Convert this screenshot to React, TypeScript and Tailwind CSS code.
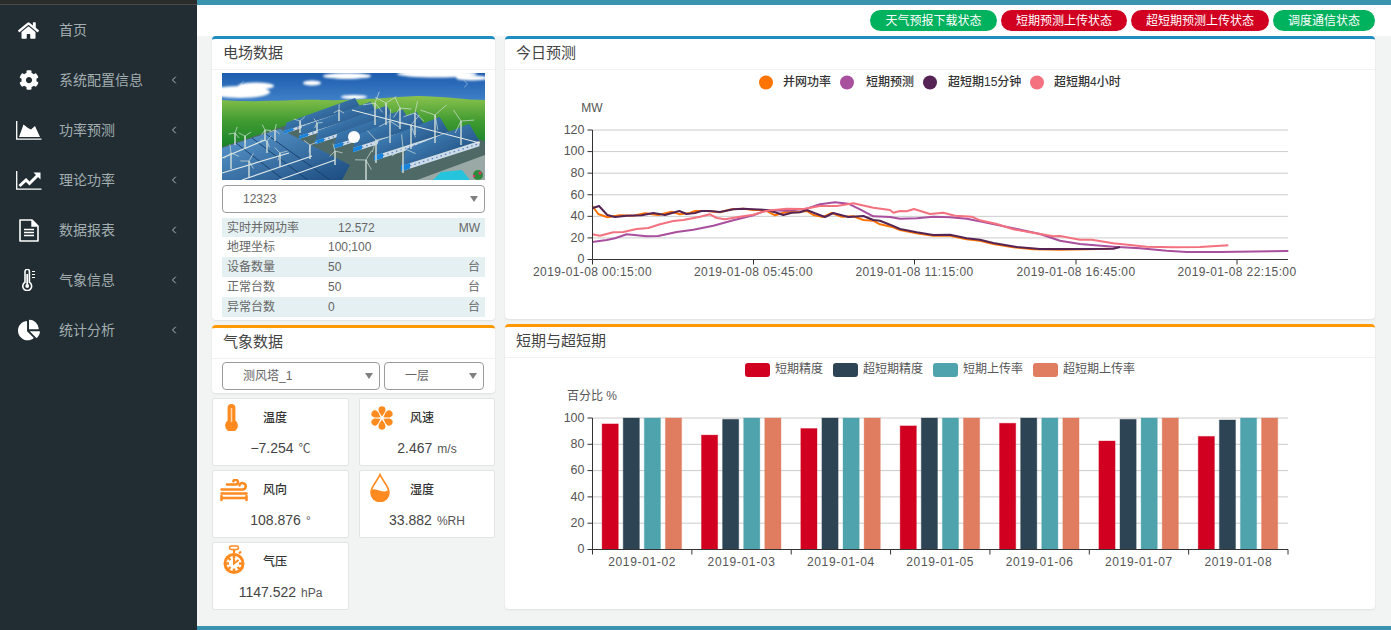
import type { ReactNode } from 'react';
import { ChevronLeft, ChevronRight } from 'lucide-react';
import { FaChartPie, FaCog, FaHome } from 'react-icons/fa';

const ORANGE = '#ff8a1f';

function SideArea() {
  return (
    <svg width="26" height="19" viewBox="0 0 26 19" fill="white">
      <path d="M.7 0v18.2H25.5" fill="none" stroke="white" strokeWidth="1.3" />
      <path d="M3 16L7.5 3.5L12 7L15 8.5L19 5L24 16z" />
    </svg>
  );
}

function SideLine() {
  return (
    <svg width="26" height="19" viewBox="0 0 26 19">
      <path d="M.7 0v18.2H25.5" fill="none" stroke="white" strokeWidth="1.3" />
      <path d="M3.5 15L10 9L13.5 12.5L22 4" fill="none" stroke="white" strokeWidth="3" />
      <path d="M17.5 1.5H24.5V8.5z" fill="white" />
    </svg>
  );
}

function SideFile() {
  return (
    <svg width="20" height="23" viewBox="0 0 20 23" fill="none" stroke="white">
      <path d="M1 1h12l6 6v15H1z" strokeWidth="1.6" strokeLinejoin="round" />
      <path d="M13 1v6h6" fill="white" strokeWidth="1.4" />
      <path d="M5 10.5h10M5 13.5h10M5 16.5h10" strokeWidth="1.5" />
    </svg>
  );
}

function SideThermometer() {
  return (
    <svg width="14" height="22" viewBox="0 0 14 22" fill="none" stroke="white" strokeWidth="1.6">
      <path d="M3 2.5a2.2 2.2 0 0 1 4.4 0v10.8a4.4 4.4 0 1 1-4.4 0z" />
      <circle cx="5.2" cy="17" r="1.9" fill="white" stroke="none" />
      <path d="M5.2 5v11" strokeWidth="1.8" />
      <path d="M10 2.5h3M10 5.5h3M10 8.5h3" strokeWidth="1.2" />
    </svg>
  );
}

const menu: { label: string; icon: ReactNode; arrow: boolean }[] = [
  { label: '首页', icon: <FaHome size={21} color="white" />, arrow: false },
  { label: '系统配置信息', icon: <FaCog size={20} color="white" />, arrow: true },
  { label: '功率预测', icon: <SideArea />, arrow: true },
  { label: '理论功率', icon: <SideLine />, arrow: true },
  { label: '数据报表', icon: <SideFile />, arrow: true },
  { label: '气象信息', icon: <SideThermometer />, arrow: true },
  { label: '统计分析', icon: <FaChartPie size={22} color="white" />, arrow: true },
];

function Sidebar() {
  return (
    <aside className="w-[197px] shrink-0 bg-[#212d33] flex flex-col">
      <div className="h-[5px] bg-[#2a2b2b] border-b border-[#474b4c]" />
      {menu.map((item) => (
        <div key={item.label} className="h-[50px] flex items-center pl-[15px] pr-[17px]">
          <div className="w-[27px] flex justify-center">{item.icon}</div>
          <span className="ml-[17px] flex-1 text-[14px] text-[#a3adb0]">{item.label}</span>
          {item.arrow && <ChevronLeft size={12} strokeWidth={2} className="text-[#b4bcbe]" />}
        </div>
      ))}
    </aside>
  );
}

function Card({ title, accent, className, children }: { title: string; accent: string; className: string; children: ReactNode }) {
  return (
    <section className={`bg-white rounded-[4px] border-t-[3px] shadow-[0_1px_2px_rgba(0,0,0,0.08)] flex flex-col ${accent} ${className}`}>
      <div className="h-[31px] shrink-0 border-b border-[#f0f1f1] pl-[11px] pb-[2px] flex items-center text-[15px] text-[#444]">
        {title}
      </div>
      {children}
    </section>
  );
}

function Select({ value, className }: { value: string; className: string }) {
  return (
    <div className={`h-[28px] border border-[#9c9c9c] rounded-[4px] pl-5 pr-[6px] flex items-center justify-between text-[12px] text-[#666] ${className}`}>
      <span>{value}</span>
      <span className="w-0 h-0 border-x-[4px] border-x-transparent border-t-[6px] border-t-[#808080]" />
    </div>
  );
}

function turbine(x: number, y: number, h: number, key: string, a: number) {
  const r = h * 0.55;
  const blades = [a, a + 120, a + 240].map((deg) => {
    const t = (deg * Math.PI) / 180;
    return `M${x} ${y - h}L${(x + r * Math.sin(t)).toFixed(1)} ${(y - h - r * Math.cos(t)).toFixed(1)}`;
  });
  return (
    <g key={key} stroke="#d3dfda" fill="none">
      <path d={`M${x} ${y}V${y - h}`} strokeWidth="1.4" />
      <path d={blades.join('')} strokeWidth="0.7" />
    </g>
  );
}

// row of the solar field: left end on the picture's diagonal, right end on the fence
function solarRow(sx: number, sy: number, gap: number, key: string) {
  const ex = (sy + 0.32 * sx + 6) / 0.607;
  const ey = sy - 0.32 * (ex - sx);
  const wall = gap * 0.3;
  const depth = gap * 0.95;
  return (
    <g key={key}>
      <polygon points={`${sx},${sy} ${ex},${ey} ${ex - depth * 0.6},${ey - depth} ${sx + depth * 0.3},${sy - depth}`} fill="url(#roof)" />
      <polygon points={`${sx},${sy} ${ex},${ey} ${ex},${ey + wall} ${sx},${sy + wall}`} fill="#ccdcea" />
      <line x1={sx} y1={sy + wall / 2} x2={ex} y2={ey + wall / 2} stroke="#5f80b8" strokeWidth="1.2" strokeDasharray="1.6 3" />
      <polygon points={`${sx},${sy} ${sx + 9},${sy - 2.9} ${sx + 9},${sy - 2.9 + wall} ${sx},${sy + wall}`} fill="#1583dc" />
    </g>
  );
}

function FarmPicture() {
  const rows = [
    [62, 58, 9], [77, 63, 10], [93, 68, 11], [112, 72, 12], [131, 75, 14], [152, 83, 16], [179, 93, 18],
  ];
  const turbines = [
    [13, 72, 12], [23, 76, 13], [43, 68, 11], [53, 68, 11], [78, 60, 12], [95, 60, 10], [117, 48, 11],
    [45, 80, 12], [58, 94, 14], [9, 96, 16], [27, 104, 16], [88, 86, 14], [113, 92, 14],
    [153, 52, 22], [164, 52, 22], [178, 56, 21], [193, 62, 22], [213, 70, 28], [239, 72, 24], [168, 70, 22],
    [189, 76, 24], [154, 90, 23], [181, 100, 25], [144, 107, 20],
  ];
  return (
    <svg viewBox="0 0 263 107" className="w-[263px] h-[107px] block shrink-0 ml-[10px] mt-[3px]">
      <defs>
        <linearGradient id="sky" x1="0" y1="0" x2="0" y2="1">
          <stop offset="0" stopColor="#1d5cae" />
          <stop offset="1" stopColor="#4e90d2" />
        </linearGradient>
        <linearGradient id="hill" x1="0" y1="0" x2="0" y2="1">
          <stop offset="0" stopColor="#8ac24e" />
          <stop offset="0.45" stopColor="#3f9a30" />
          <stop offset="1" stopColor="#0d7d2a" />
        </linearGradient>
        <linearGradient id="roof" x1="0" y1="0" x2="1" y2="1">
          <stop offset="0" stopColor="#4f97d0" />
          <stop offset="1" stopColor="#173f70" />
        </linearGradient>
        <linearGradient id="block" x1="0" y1="0" x2="1" y2="1">
          <stop offset="0" stopColor="#5d9dd2" />
          <stop offset="1" stopColor="#1b4a7e" />
        </linearGradient>
        <filter id="soft"><feGaussianBlur stdDeviation="1.3" /></filter>
        <filter id="pic"><feGaussianBlur stdDeviation="0.3" /></filter>
      </defs>
      <g filter="url(#pic)">
        <rect width="263" height="40" fill="url(#sky)" />
        <g fill="white" filter="url(#soft)">
          <ellipse cx="18" cy="19" rx="30" ry="6" />
          <ellipse cx="34" cy="13" rx="18" ry="3.5" />
          <ellipse cx="90" cy="10" rx="9" ry="2.5" />
          <ellipse cx="125" cy="3" rx="24" ry="3" />
          <ellipse cx="215" cy="1" rx="40" ry="3.5" />
          <ellipse cx="132" cy="24" rx="13" ry="2" />
          <ellipse cx="250" cy="5" rx="16" ry="2.5" />
        </g>
        <path d="M0 27C40 30 70 26 100 27C130 28 170 24 195 23C220 23 245 27 263 27V80H0z" fill="url(#hill)" />
        <polygon points="0,74 62,53 140,32 263,68 263,107 0,107" fill="#4f6a66" />
        <polygon points="195,107 263,82 263,107" fill="#9aa9a6" />
        <polygon points="0,75 58,56 128,92 120,107 0,107" fill="url(#block)" />
        <g stroke="#163f6c" strokeWidth="0.9">
          <path d="M14 70L62 107M30 65L86 107M44 61L108 107" />
        </g>
        <g stroke="#dfe8e8" strokeWidth="1.2">
          <path d="M0 85L43 67M0 100L67 80M20 107L90 83M57 107L113 87" />
        </g>
        {rows.map(([x, y, gap], i) => solarRow(x, y, gap, `r${i}`))}
        <path d="M130 37L258 70" stroke="#e8eeea" strokeWidth="1" />
        <polygon points="211,107 219,99 240,97 248,107" fill="#27c3dc" />
        <circle cx="256" cy="102" r="5" fill="#2f8a3a" />
        <circle cx="258" cy="100" r="1.6" fill="#e0336a" />
        <circle cx="252" cy="103" r="1.2" fill="#e0336a" />
        {turbines.map(([x, y, h], i) => turbine(x, y, h, `t${i}`, i * 37 + 20))}
      </g>
      <circle cx="132" cy="64" r="6" fill="white" />
    </svg>
  );
}

function FarmOverlay() {
  return (
    <div className="relative shrink-0">
      <FarmPicture />
      <ChevronLeft size={12} strokeWidth={1} className="absolute left-[24px] top-[8px] text-white/70" />
      <ChevronRight size={12} strokeWidth={1} className="absolute left-[248px] top-[8px] text-white/80" />
    </div>
  );
}

const fieldRows = [
  { label: '实时并网功率', value: '12.572', unit: 'MW', left: 'ml-[63px]', shade: true },
  { label: '地理坐标', value: '100;100', unit: '', left: 'ml-[53px]', shade: false },
  { label: '设备数量', value: '50', unit: '台', left: 'ml-[53px]', shade: true },
  { label: '正常台数', value: '50', unit: '台', left: 'ml-[53px]', shade: false },
  { label: '异常台数', value: '0', unit: '台', left: 'ml-[53px]', shade: true },
];

function FieldCard() {
  return (
    <Card title="电场数据" accent="border-t-[#1f8dbd]" className="h-[284px]">
      <FarmOverlay />
      <Select value="12323" className="mx-[10px] mt-[5px]" />
      <div className="mx-[10px] mt-[5px] text-[12px] text-[#666]">
        {fieldRows.map((row, i) => (
          <div key={row.label} className={`${i === 0 ? 'h-[19px]' : 'h-[20px]'} px-[5px] flex items-center ${row.shade ? 'bg-[#e4f0f2]' : ''}`}>
            <span className="w-[48px] whitespace-nowrap">{row.label}</span>
            <span className={`${row.left} flex-1`}>{row.value}</span>
            <span>{row.unit}</span>
          </div>
        ))}
      </div>
    </Card>
  );
}

function ThermoIcon() {
  return (
    <svg width="13" height="27" viewBox="0 0 13 27" className="ml-[12px] mt-[5px]">
      <path d="M2.6 4a3.9 4 0 0 1 7.8 0v12.4a6.4 6.4 0 1 1-7.8 0z" fill={ORANGE} />
      <path d="M6.5 4v14" stroke="#ffd6aa" strokeWidth="1.5" />
    </svg>
  );
}

function FanIcon() {
  return (
    <svg width="24" height="26" viewBox="-13 -13.5 26 27" className="ml-[10px] mt-[6px]" fill={ORANGE}>
      {[0, 60, 120, 180, 240, 300].map((deg) => (
        <path key={deg} d="M0 -1.6C-1 -4 -4.6 -6.6 -3.6 -10.4C-2.8 -13.4 2.8 -13.4 3.6 -10.4C4.6 -6.6 1 -4 0 -1.6z" transform={`rotate(${deg})`} />
      ))}
    </svg>
  );
}

function WindIcon() {
  return (
    <svg width="28" height="23" viewBox="0 0 28 23" fill="none" stroke={ORANGE} strokeWidth="2.5" strokeLinecap="round" className="ml-[7px] mt-[8px]">
      <path d="M7 5.5h8.5a2.4 2.4 0 1 0-2.2-3.2" />
      <path d="M1.5 10.5h21a3.2 3.2 0 1 0-3-4.2" />
      <path d="M1.5 14.5h25" />
      <path d="M1.5 19h25M1.5 17v4M26.5 17v4" />
    </svg>
  );
}

function DropIcon() {
  return (
    <svg width="20" height="29" viewBox="0 0 20 29" className="ml-[10px] mt-[2px]">
      <path d="M10 1.5C7.5 8 1 13.5 1 19.5a9 9 0 0 0 18 0C19 13.5 12.5 8 10 1.5z" fill="white" stroke={ORANGE} strokeWidth="1.6" />
      <path d="M1 17c3-1.6 5-.6 9 .8s6 .6 9-.8v2.5a9 9 0 0 1-18 0z" fill={ORANGE} />
    </svg>
  );
}

function WatchIcon() {
  return (
    <svg width="22" height="30" viewBox="0 0 22 30" className="ml-[10px] mt-[2px]">
      <rect x="6.5" y="1" width="9" height="3.4" rx="1.7" fill="none" stroke={ORANGE} strokeWidth="1.5" />
      <path d="M11 4v4M18 6.5l-2 2" stroke={ORANGE} strokeWidth="2.2" />
      <circle cx="11" cy="18.5" r="10.5" fill={ORANGE} />
      <circle cx="11" cy="18.5" r="7.6" fill="white" />
      <path d="M11 10.5v3M11 23.5v3M3 18.5h3M16 18.5h3M5.5 13l2 2M16.5 24l-2-2M5.5 24l2-2" stroke={ORANGE} strokeWidth="2.4" />
      <path d="M11 13.5v5l4.5-3.5" fill="none" stroke={ORANGE} strokeWidth="2" />
    </svg>
  );
}

const tiles = [
  { title: '温度', value: '−7.254', unit: '℃', icon: <ThermoIcon /> },
  { title: '风速', value: '2.467', unit: 'm/s', icon: <FanIcon /> },
  { title: '风向', value: '108.876', unit: '°', icon: <WindIcon /> },
  { title: '湿度', value: '33.882', unit: '%RH', icon: <DropIcon /> },
  { title: '气压', value: '1147.522', unit: 'hPa', icon: <WatchIcon /> },
];

function WeatherColumn() {
  return (
    <>
      <Card title="气象数据" accent="border-t-[#ff9900]" className="h-[68px] mt-[5px]">
        <div className="flex gap-1 px-[10px] pt-[3px]">
          <Select value="测风塔_1" className="w-[158px]" />
          <Select value="一层" className="w-[100px]" />
        </div>
      </Card>
      <div className="grid grid-cols-[137px_136px] gap-x-[10px] gap-y-[4px] mt-[5px]">
        {tiles.map((tile) => (
          <div key={tile.title} className="h-[68px] bg-white border border-[#e3e5e5] rounded-[2px]">
            <div className="h-[36px] flex">
              <div className="w-[50px]">{tile.icon}</div>
              <span className="mt-[10px] text-[12px] font-medium text-[#333]">{tile.title}</span>
            </div>
            <div className="mt-[3px] text-center text-[#444] text-[14px]">
              {tile.value}
              <span className="ml-[5px] text-[12px] text-[#555]">{tile.unit}</span>
            </div>
          </div>
        ))}
      </div>
    </>
  );
}

const XL = 592.5;
const XR = 1288;

// traced from the picture: first list is the left half, second the right half
function trace(left: number[][], right: number[][]) {
  const a = left.map(([x, y]) => `${(520 + x / 3).toFixed(1)},${(120 + y / 3).toFixed(1)}`);
  const b = right.map(([x, y]) => `${(900 + x / 3).toFixed(1)},${(120 + y / 3).toFixed(1)}`);
  return [...a, ...b].join(' ');
}

const lines = [
  {
    color: '#ff7300',
    points: trace(
      [[217, 258], [235, 282], [262, 292], [300, 286], [340, 287], [375, 280], [415, 285], [455, 275], [480, 283], [510, 279], [525, 273], [560, 273], [600, 277], [635, 268], [670, 266], [700, 270], [735, 270], [765, 286], [800, 275], [830, 277], [860, 273], [880, 285], [910, 291], [935, 279], [965, 290], [1000, 289], [1030, 300], [1060, 302], [1080, 313], [1120, 322]],
      [[0, 330], [50, 340], [100, 347], [150, 347], [200, 358], [240, 362], [280, 372], [340, 382], [400, 388], [480, 389], [560, 388], [630, 386]],
    ),
  },
  {
    color: '#a84f9e',
    points: trace(
      [[217, 366], [260, 360], [285, 355], [320, 343], [380, 349], [415, 348], [470, 336], [520, 329], [580, 317], [640, 301], [700, 286], [740, 271], [800, 272], [860, 266], [900, 253], [945, 247], [985, 251], [1020, 268], [1060, 289], [1110, 291]],
      [[0, 296], [50, 295], [100, 290], [150, 292], [200, 296], [250, 306], [340, 325], [420, 342], [480, 362], [540, 372], [640, 380], [720, 385], [800, 392], [860, 396], [960, 396], [1165, 393]],
    ),
  },
  {
    color: '#552455',
    points: trace(
      [[217, 265], [237, 258], [262, 285], [285, 291], [320, 287], [365, 286], [400, 279], [435, 285], [478, 273], [500, 282], [525, 279], [545, 273], [570, 273], [600, 276], [640, 268], [670, 266], [700, 268], [740, 270], [765, 277], [790, 285], [815, 278], [840, 277], [860, 270], [885, 280], [915, 291], [940, 279], [985, 291], [1030, 288], [1060, 300], [1080, 302], [1110, 314]],
      [[0, 327], [50, 337], [100, 345], [150, 344], [200, 355], [240, 359], [280, 369], [350, 381], [420, 387], [490, 387], [560, 387], [640, 386], [660, 381]],
    ),
  },
  {
    color: '#f4717f',
    points: trace(
      [[217, 343], [240, 347], [280, 337], [310, 336], [350, 327], [385, 324], [420, 313], [460, 303], [490, 300], [540, 290], [570, 283], [590, 294], [615, 298], [660, 290], [700, 284], [740, 272], [800, 266], [850, 267], [900, 258], [950, 258], [1000, 250], [1060, 263], [1110, 270], [1120, 278]],
      [[0, 273], [20, 274], [42, 267], [90, 282], [130, 278], [165, 287], [215, 290], [240, 301], [290, 312], [340, 328], [420, 342], [460, 349], [480, 348], [540, 359], [575, 359], [640, 370], [740, 380], [820, 382], [900, 381], [985, 376]],
    ),
  },
];

const lineLegend = [
  { dot: 766, text: 783, label: '并网功率', color: '#ff7300' },
  { dot: 847, text: 866, label: '短期预测', color: '#a84f9e' },
  { dot: 930, text: 948, label: '超短期15分钟', color: '#552455' },
  { dot: 1037, text: 1054, label: '超短期4小时', color: '#f4717f' },
];

const lineTicks = [
  { x: 592.5, label: '2019-01-08 00:15:00' },
  { x: 753.5, label: '2019-01-08 05:45:00' },
  { x: 914.5, label: '2019-01-08 11:15:00' },
  { x: 1076, label: '2019-01-08 16:45:00' },
  { x: 1237, label: '2019-01-08 22:15:00' },
];

function ForecastChart() {
  return (
    <svg viewBox="505 70 870 246" className="w-[870px] h-[246px] block">
      {lineLegend.map((l) => (
        <g key={l.label}>
          <circle cx={l.dot} cy="82.5" r="7" fill={l.color} />
          <text x={l.text} y="83" dominantBaseline="middle" fontSize="12" fontWeight="500" fill="#333">{l.label}</text>
        </g>
      ))}
      <text x="592" y="109" textAnchor="middle" dominantBaseline="middle" fontSize="12" fill="#555">MW</text>
      {[0, 20, 40, 60, 80, 100, 120].map((v) => {
        const y = 259.5 - (v / 120) * 129.5;
        return (
          <g key={v}>
            {v > 0 && <line x1={XL} x2={XR} y1={y} y2={y} stroke="#ccc" />}
            <line x1={XL - 5} x2={XL} y1={y} y2={y} stroke="#333" />
            <text x={XL - 8} y={y + 0.5} textAnchor="end" dominantBaseline="middle" fontSize="12.5" fill="#555">{v}</text>
          </g>
        );
      })}
      {lines.map((l) => (
        <polyline key={l.color} points={l.points} fill="none" stroke={l.color} strokeWidth="2" strokeLinejoin="round" />
      ))}
      <line x1={XL} x2={XL} y1="130" y2="259.5" stroke="#333" />
      <line x1={XL} x2={XR} y1="259.5" y2="259.5" stroke="#333" />
      {lineTicks.map((t) => (
        <g key={t.x}>
          <line x1={t.x} x2={t.x} y1="259.5" y2="264.5" stroke="#333" />
          <text x={t.x} y="272.5" textAnchor="middle" dominantBaseline="middle" fontSize="12" letterSpacing="0.4" fill="#555">{t.label}</text>
        </g>
      ))}
    </svg>
  );
}

const barLegend = [
  { x: 745, label: '短期精度', color: '#d10020' },
  { x: 833, label: '超短期精度', color: '#2d4454' },
  { x: 933, label: '短期上传率', color: '#4fa3ac' },
  { x: 1033, label: '超短期上传率', color: '#e07c5f' },
];

const barDays = [
  { day: '2019-01-02', values: [95.5, 100, 100, 100] },
  { day: '2019-01-03', values: [87, 99, 100, 100] },
  { day: '2019-01-04', values: [92, 100, 100, 100] },
  { day: '2019-01-05', values: [94, 100, 100, 100] },
  { day: '2019-01-06', values: [96, 100, 100, 100] },
  { day: '2019-01-07', values: [82.5, 99, 100, 100] },
  { day: '2019-01-08', values: [86, 98.5, 100, 100] },
];

function AccuracyChart() {
  const step = (XR - XL) / 7;
  return (
    <svg viewBox="505 358 870 250" className="w-[870px] h-[250px] block">
      {barLegend.map((l) => (
        <g key={l.label}>
          <rect x={l.x} y="363" width="25" height="14" rx="3" fill={l.color} />
          <text x={l.x + 30} y="370" dominantBaseline="middle" fontSize="12" fill="#555">{l.label}</text>
        </g>
      ))}
      <text x="567" y="397" dominantBaseline="middle" fontSize="12" fill="#555">百分比 %</text>
      {[0, 20, 40, 60, 80, 100].map((v) => {
        const y = 549.5 - (v / 100) * 131.5;
        return (
          <g key={v}>
            {v > 0 && <line x1={XL} x2={XR} y1={y} y2={y} stroke="#ccc" />}
            <line x1={XL - 5} x2={XL} y1={y} y2={y} stroke="#333" />
            <text x={XL - 8} y={y + 0.5} textAnchor="end" dominantBaseline="middle" fontSize="12.5" fill="#555">{v}</text>
          </g>
        );
      })}
      {barDays.map((d, i) => {
        const left = XL + i * step;
        return (
          <g key={d.day}>
            {d.values.map((v, j) => {
              const h = (v / 100) * 131.5;
              const color = barLegend[j].color;
              return <rect key={j} x={left + 9.6 + j * 21.1} y={549.5 - h} width="16.2" height={h} fill={color} stroke={color} strokeOpacity="0.35" />;
            })}
            <line x1={left} x2={left} y1="549.5" y2="554.5" stroke="#333" />
            <text x={left + step / 2} y="563" textAnchor="middle" dominantBaseline="middle" fontSize="12" letterSpacing="0.65" fill="#555">{d.day}</text>
          </g>
        );
      })}
      <line x1={XL} x2={XL} y1="418" y2="549.5" stroke="#333" />
      <line x1={XL} x2={XR} y1="549.5" y2="549.5" stroke="#333" />
      <line x1={XR} x2={XR} y1="549.5" y2="554.5" stroke="#333" />
    </svg>
  );
}

const statuses = [
  { label: '天气预报下载状态', className: 'w-[127px] bg-[#00b15d]' },
  { label: '短期预测上传状态', className: 'w-[126px] bg-[#d10020]' },
  { label: '超短期预测上传状态', className: 'w-[138px] bg-[#d10020]' },
  { label: '调度通信状态', className: 'w-[102px] bg-[#00b15d]' },
];

export default function App() {
  return (
    <div className="flex h-screen overflow-hidden bg-[#f2f4f4] font-['Liberation_Sans','Noto_Sans_CJK_SC',sans-serif]">
      <Sidebar />
      <main className="flex-1 flex flex-col min-w-0">
        <div className="h-[5px] shrink-0 bg-[#3a94b0]" />
        <header className="h-[31px] shrink-0 bg-white flex justify-end items-start gap-1 pt-[5px] pr-[16px]">
          {statuses.map((s) => (
            <span key={s.label} className={`h-[21px] rounded-full text-white text-[12px] flex items-center justify-center ${s.className}`}>
              {s.label}
            </span>
          ))}
        </header>
        <div className="flex-1 flex pl-[15px] gap-[10px]">
          <div className="w-[283px] flex flex-col">
            <FieldCard />
            <WeatherColumn />
          </div>
          <div className="w-[870px] flex flex-col gap-[5px]">
            <Card title="今日预测" accent="border-t-[#1f8dbd]" className="h-[283px]">
              <ForecastChart />
            </Card>
            <Card title="短期与超短期" accent="border-t-[#ff9900]" className="h-[285px]">
              <AccuracyChart />
            </Card>
          </div>
        </div>
        <div className="h-[4px] shrink-0 bg-[#3a94b0]" />
      </main>
    </div>
  );
}
